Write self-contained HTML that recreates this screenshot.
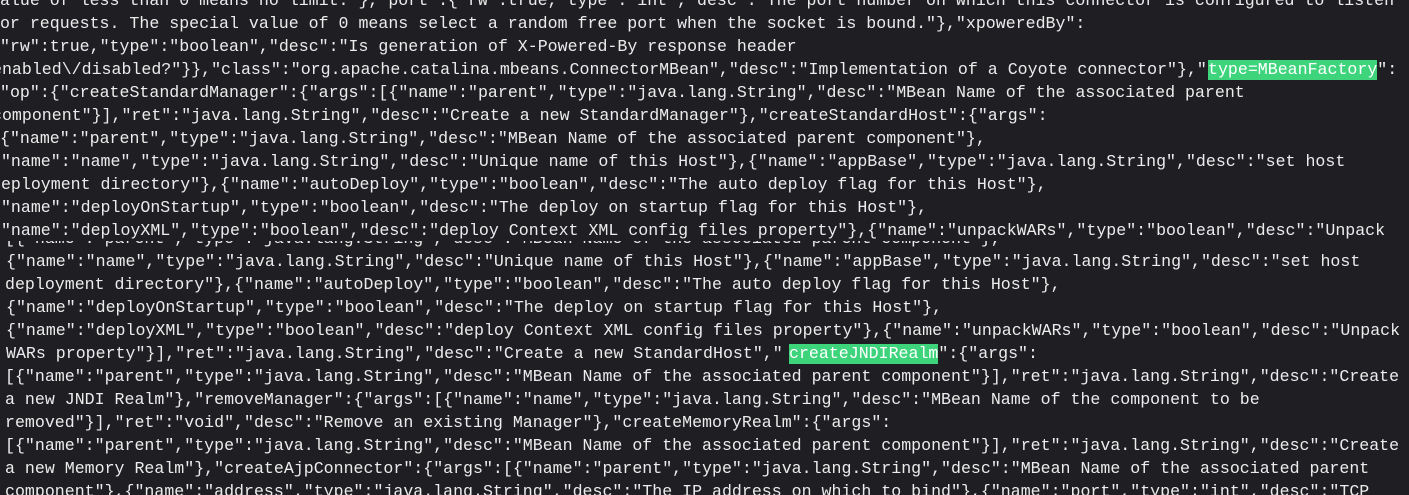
<!DOCTYPE html>
<html><head><meta charset="utf-8"><style>
html,body{margin:0;padding:0;background:#1f1f23;}
body{width:1409px;height:495px;overflow:hidden;position:relative;}
.p{position:absolute;left:0;width:1409px;overflow:hidden;background:#1f1f23;}
.l{position:absolute;white-space:pre;font-family:"Liberation Mono","Noto Sans CJK SC",monospace;font-size:16.6px;line-height:23px;height:23px;color:#ececec;}
.h{background:#3dd47c;color:#fff;display:inline-block;line-height:20px;height:20px;}
</style></head><body>
<div class="p" style="top:0;height:241px;">
<div class="l" style="top:-11.5px;left:-10px">value of less than 0 means no limit."},"port":{"rw":true,"type":"int","desc":"The port number on which this connector is configured to listen</div>
<div class="l" style="top:11.5px;left:-10px">for requests. The special value of 0 means select a random free port when the socket is bound."},"xpoweredBy":</div>
<div class="l" style="top:34.5px;left:0">"rw":true,"type":"boolean","desc":"Is generation of X-Powered-By response header</div>
<div class="l" style="top:57.5px;left:-8px">enabled\/disabled?"}},"class":"org.apache.catalina.mbeans.ConnectorMBean","desc":"Implementation of a Coyote connector"},"</div>
<div class="l" style="top:57.5px;left:1208px"><span class="h">type=MBeanFactory</span>":</div>
<div class="l" style="top:80.5px;left:0">"op":{"createStandardManager":{"args":[{"name":"parent","type":"java.lang.String","desc":"MBean Name of the associated parent</div>
<div class="l" style="top:103.5px;left:-8px">component"}],"ret":"java.lang.String","desc":"Create a new StandardManager"},"createStandardHost":{"args":</div>
<div class="l" style="top:126.5px;left:0">{"name":"parent","type":"java.lang.String","desc":"MBean Name of the associated parent component"},</div>
<div class="l" style="top:149.5px;left:-9px">{"name":"name","type":"java.lang.String","desc":"Unique name of this Host"},{"name":"appBase","type":"java.lang.String","desc":"set host</div>
<div class="l" style="top:172.5px;left:-9px">deployment directory"},{"name":"autoDeploy","type":"boolean","desc":"The auto deploy flag for this Host"},</div>
<div class="l" style="top:195.5px;left:-9px">{"name":"deployOnStartup","type":"boolean","desc":"The deploy on startup flag for this Host"},</div>
<div class="l" style="top:218.5px;left:-9px">{"name":"deployXML","type":"boolean","desc":"deploy Context XML config files property"},{"name":"unpackWARs","type":"boolean","desc":"Unpack</div>
</div>
<div class="p" style="top:241px;height:254px;">
<div class="l" style="top:-14.5px;left:5px">[{"name":"parent","type":"java.lang.String","desc":"MBean Name of the associated parent component"},</div>
<div class="l" style="top:8.5px;left:6px">{"name":"name","type":"java.lang.String","desc":"Unique name of this Host"},{"name":"appBase","type":"java.lang.String","desc":"set host</div>
<div class="l" style="top:31.5px;left:5px">deployment directory"},{"name":"autoDeploy","type":"boolean","desc":"The auto deploy flag for this Host"},</div>
<div class="l" style="top:54.5px;left:6px">{"name":"deployOnStartup","type":"boolean","desc":"The deploy on startup flag for this Host"},</div>
<div class="l" style="top:77.5px;left:6px">{"name":"deployXML","type":"boolean","desc":"deploy Context XML config files property"},{"name":"unpackWARs","type":"boolean","desc":"Unpack</div>
<div class="l" style="top:100.5px;left:6px">WARs property"}],"ret":"java.lang.String","desc":"Create a new StandardHost","</div>
<div class="l" style="top:100.5px;left:789px"><span class="h">createJNDIRealm</span>":{"args":</div>
<div class="l" style="top:123.5px;left:5px">[{"name":"parent","type":"java.lang.String","desc":"MBean Name of the associated parent component"}],"ret":"java.lang.String","desc":"Create</div>
<div class="l" style="top:146.5px;left:5px">a new JNDI Realm"},"removeManager":{"args":[{"name":"name","type":"java.lang.String","desc":"MBean Name of the component to be</div>
<div class="l" style="top:169.5px;left:5px">removed"}],"ret":"void","desc":"Remove an existing Manager"},"createMemoryRealm":{"args":</div>
<div class="l" style="top:192.5px;left:5px">[{"name":"parent","type":"java.lang.String","desc":"MBean Name of the associated parent component"}],"ret":"java.lang.String","desc":"Create</div>
<div class="l" style="top:215.5px;left:5px">a new Memory Realm"},"createAjpConnector":{"args":[{"name":"parent","type":"java.lang.String","desc":"MBean Name of the associated parent</div>
<div class="l" style="top:238.5px;left:5px">component"},{"name":"address","type":"java.lang.String","desc":"The IP address on which to bind"},{"name":"port","type":"int","desc":"TCP</div>
</div>
</body></html>
